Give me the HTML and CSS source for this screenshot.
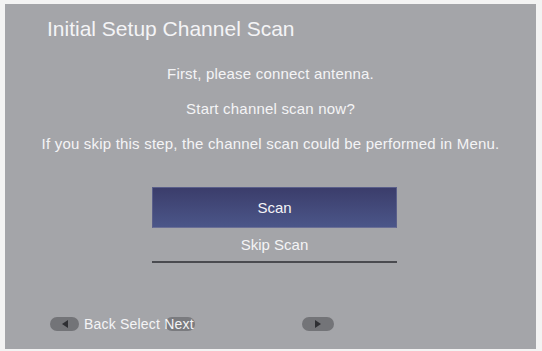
FILE: index.html
```html
<!DOCTYPE html>
<html lang="en">

<head>
    <meta charset="UTF-8" />
    <meta name="viewport" content="width=device-width, initial-scale=1.0" />
    <title>Initial Setup Channel Scan</title>
    <link rel="stylesheet" href="styles.css">
</head>

<body>
    <div class="screen">
        <h1 class="title">Initial Setup Channel Scan</h1>

        <div class="messages">
            <p>First, please connect antenna.</p>
            <p>Start channel scan now?</p>
            <p>If you skip this step, the channel scan could be performed in Menu.</p>
        </div>

        <div class="options">
            <div class="option selected">Scan</div>
            <div class="option">Skip Scan</div>
        </div>

        <div class="hints">
            <span class="key"><span class="arrow left"></span></span>
            <span class="hint-text">Back Select Next</span>
            <span class="key key-mid"></span>
            <span class="key key-right"><span class="arrow right"></span></span>
        </div>
    </div>
</body>

</html>
```

FILE: styles.css
```css
body {
    margin: 0;
    background: #f3f3f3;
    font-family: 'Liberation Sans', Arial, sans-serif;
}

.screen {
    position: relative;
    margin: 4px 6px 0 5px;
    height: 345px;
    background: #a4a5a9;
    color: #f4f4f6;
    display: flex;
    flex-direction: column;
}

.title {
    margin: 12px 0 0 42px;
    font-size: 21px;
    font-weight: normal;
    line-height: 26px;
}

.messages {
    margin-top: 23px;
    text-align: center;
    font-size: 15px;
    letter-spacing: 0.2px;
}

.messages p {
    margin: 0 0 17px;
    line-height: 18px;
}

.messages p:last-child {
    margin-bottom: 0;
}

.options {
    margin: 34px 0 0 147px;
    width: 245px;
}

.option {
    height: 33px;
    line-height: 33px;
    text-align: center;
    font-size: 15px;
    border-bottom: 2px solid #4a4b50;
}

.option.selected {
    height: 39px;
    line-height: 39px;
    border: 1px solid #5a5f8a;
    border-bottom-color: #6a6f96;
    background: linear-gradient(#3b3d6b, #4b5689);
}

.hints {
    position: relative;
    margin-top: auto;
    margin-bottom: 17px;
    padding-left: 45px;
    display: flex;
    align-items: center;
    font-size: 14px;
    letter-spacing: 0.2px;
}

.key {
    display: inline-flex;
    align-items: center;
    justify-content: center;
    width: 29px;
    height: 14px;
    border-radius: 7px;
    background: #737478;
}

.key-mid {
    position: absolute;
    left: 160px;
    width: 30px;
    background: #7a7b7f;
}

.key-right {
    margin-left: 108px;
    width: 32px;
}

.hint-text {
    position: relative;
    z-index: 1;
    margin-left: 5px;
}

.arrow {
    width: 0;
    height: 0;
    border-top: 4px solid transparent;
    border-bottom: 4px solid transparent;
}

.arrow.left {
    border-right: 6px solid #2e2f33;
}

.arrow.right {
    border-left: 6px solid #2e2f33;
}
```
